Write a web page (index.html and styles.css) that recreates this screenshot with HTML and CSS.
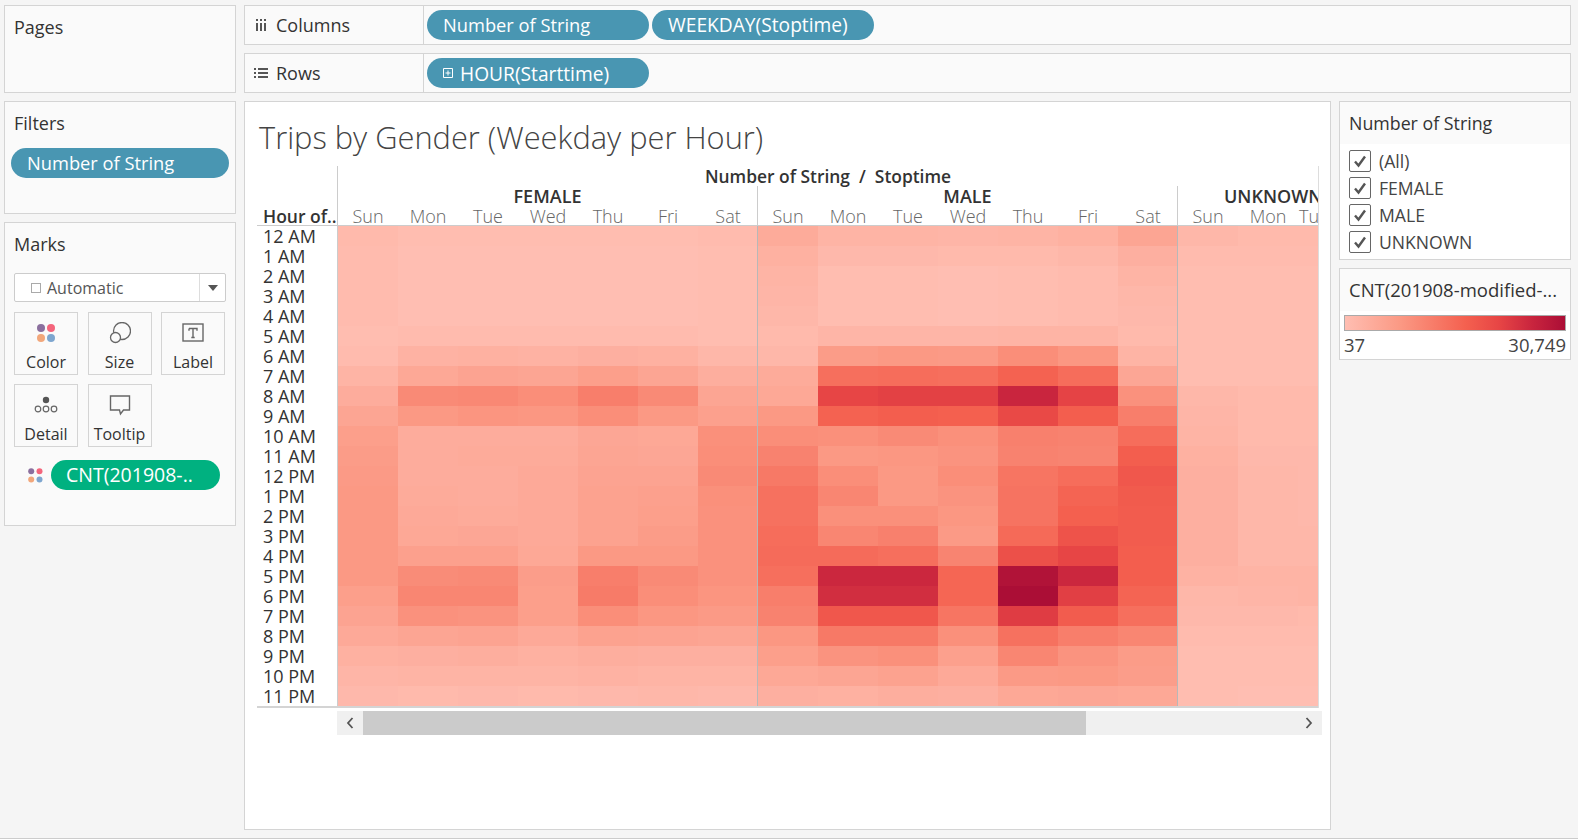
FILE: index.html
```html
<!DOCTYPE html>
<html lang="en">
<head>
    <meta charset="UTF-8">
    <title>Trips by Gender (Weekday per Hour)</title>
    <link rel="stylesheet" href="styles.css">
</head>
<body>
    <div class="app">
        <!-- Left cards -->
        <div class="left">
            <section class="card pages"><h3>Pages</h3></section>
            <section class="card filters">
                <h3>Filters</h3>
                <div class="pill blue filter-pill">Number of String</div>
            </section>
            <section class="card marks">
                <h3>Marks</h3>
                <div class="mark-select">
                    <span class="mark-box"></span>
                    <span class="mark-name">Automatic</span>
                    <span class="mark-drop"><span class="caret"></span></span>
                </div>
                <div class="mark-grid">
                    <div class="mark-btn">
                        <svg width="22" height="22" viewBox="0 0 22 22"><circle cx="6" cy="6" r="4" fill="#8b6f9e"/><circle cx="16" cy="6" r="4" fill="#f4657c"/><circle cx="6" cy="16" r="4" fill="#f2a77b"/><circle cx="16" cy="16" r="4" fill="#7ea6cf"/></svg>
                        <span>Color</span>
                    </div>
                    <div class="mark-btn">
                        <svg width="22" height="22" viewBox="0 0 22 22"><circle cx="13" cy="9" r="8.5" fill="none" stroke="#666" stroke-width="1.3"/><circle cx="6.5" cy="15.5" r="5" fill="#fafafa" stroke="#666" stroke-width="1.3"/></svg>
                        <span>Size</span>
                    </div>
                    <div class="mark-btn">
                        <svg width="22" height="22" viewBox="0 0 22 22"><rect x="1" y="2" width="20" height="17" fill="none" stroke="#666" stroke-width="1.4"/><path d="M7 6.5h8v2.2M7 6.5v2.2M11 6.5v9M9.3 15.5h3.4" fill="none" stroke="#666" stroke-width="1.4"/></svg>
                        <span>Label</span>
                    </div>
                    <div class="mark-btn">
                        <svg width="24" height="22" viewBox="0 0 24 22"><circle cx="12" cy="6" r="3.2" fill="#555"/><circle cx="4" cy="15" r="2.8" fill="none" stroke="#666" stroke-width="1.2"/><circle cx="12" cy="15" r="2.8" fill="none" stroke="#666" stroke-width="1.2"/><circle cx="20" cy="15" r="2.8" fill="none" stroke="#666" stroke-width="1.2"/></svg>
                        <span>Detail</span>
                    </div>
                    <div class="mark-btn">
                        <svg width="22" height="22" viewBox="0 0 22 22"><path d="M1.5 2h19v14h-6l-3 4-1-4h-9z" fill="none" stroke="#666" stroke-width="1.4"/></svg>
                        <span>Tooltip</span>
                    </div>
                </div>
                <div class="mark-field">
                    <svg width="15" height="15" viewBox="0 0 15 15"><circle cx="3.2" cy="3.2" r="3" fill="#8b6f9e"/><circle cx="11.5" cy="3.2" r="3" fill="#f4657c"/><circle cx="3.2" cy="11.5" r="3" fill="#f2a77b"/><circle cx="11.5" cy="11.5" r="3" fill="#7ea6cf"/></svg>
                    <div class="pill green">CNT(201908-..</div>
                </div>
            </section>
        </div>

        <div class="center">
            <!-- Shelves -->
            <div class="shelf">
                <div class="shelf-label">
                    <svg width="12" height="12" viewBox="0 0 12 12"><path d="M1 0h2v2H1zM5 0h2v2H5zM9 0h2v2H9zM1 4h2v8H1zM5 4h2v8H5zM9 4h2v8H9z" fill="#555"/></svg>
                    <span>Columns</span>
                </div>
                <div class="shelf-pills">
                    <div class="pill blue shelf-pill">Number of String</div>
                    <div class="pill blue shelf-pill caps">WEEKDAY(Stoptime)</div>
                </div>
            </div>
            <div class="shelf">
                <div class="shelf-label">
                    <svg width="14" height="12" viewBox="0 0 14 12"><path d="M0 1h2v2H0zM4 1h10v2H4zM0 5h2v2H0zM4 5h10v2H4zM0 9h2v2H0zM4 9h10v2H4z" fill="#555"/></svg>
                    <span>Rows</span>
                </div>
                <div class="shelf-pills">
                    <div class="pill blue shelf-pill row-pill caps">
                        <svg width="10" height="10" viewBox="0 0 10 10"><path d="M.5.5h9v9h-9zM2.5 5h5M5 2.5v5" fill="none" stroke="#fff"/></svg>
                        <span>HOUR(Starttime)</span>
                    </div>
                </div>
            </div>

            <div class="work">
                <!-- Worksheet -->
                <main class="view">
                    <h1 class="title">Trips by Gender (Weekday per Hour)</h1>
                    <div class="chart">
                        <div class="tier">
                            <div class="corner"></div>
                            <div class="tier-title">Number of String&nbsp; /&nbsp; Stoptime</div>
                        </div>
                        <div class="tier">
                            <div class="corner"></div>
                            <div class="gender">FEMALE</div>
                            <div class="gender">MALE</div>
                            <div class="gender gender-cut">UNKNOWN</div>
                        </div>
                        <div class="tier tier-days">
                            <div class="corner corner-name">Hour of..</div>
                            <div class="days">
                                <span>Sun</span><span>Mon</span><span>Tue</span><span>Wed</span><span>Thu</span><span>Fri</span><span>Sat</span>
                            </div>
                            <div class="days">
                                <span>Sun</span><span>Mon</span><span>Tue</span><span>Wed</span><span>Thu</span><span>Fri</span><span>Sat</span>
                            </div>
                            <div class="days days-cut">
                                <span>Sun</span><span>Mon</span><span>Tue</span>
                            </div>
                        </div>
                        <div class="plot">
                            <div class="hours">
                                <div>12 AM</div><div>1 AM</div><div>2 AM</div><div>3 AM</div><div>4 AM</div><div>5 AM</div>
                                <div>6 AM</div><div>7 AM</div><div>8 AM</div><div>9 AM</div><div>10 AM</div><div>11 AM</div>
                                <div>12 PM</div><div>1 PM</div><div>2 PM</div><div>3 PM</div><div>4 PM</div><div>5 PM</div>
                                <div>6 PM</div><div>7 PM</div><div>8 PM</div><div>9 PM</div><div>10 PM</div><div>11 PM</div>
                            </div>
                            <div class="heat" id="heat"></div>
                        </div>
                    </div>
                    <div class="scrollbar">
                        <div class="scroll-btn">
                            <svg width="8" height="12" viewBox="0 0 8 12"><path d="M6.5 1 2 6l4.5 5" fill="none" stroke="#555" stroke-width="1.8"/></svg>
                        </div>
                        <div class="scroll-thumb"></div>
                        <div class="scroll-btn scroll-end">
                            <svg width="8" height="12" viewBox="0 0 8 12"><path d="M1.5 1 6 6l-4.5 5" fill="none" stroke="#555" stroke-width="1.8"/></svg>
                        </div>
                    </div>
                </main>

                <!-- Right cards -->
                <aside class="side">
                    <section class="side-card">
                        <div class="side-title filter-title">Number of String</div>
                        <div class="check-list">
                            <div class="check"><span class="box"><svg width="14" height="14" viewBox="0 0 14 14"><path d="M2 7.5 5.5 11.5 12 2.5" fill="none" stroke="#555" stroke-width="2.4"/></svg></span>(All)</div>
                            <div class="check"><span class="box"><svg width="14" height="14" viewBox="0 0 14 14"><path d="M2 7.5 5.5 11.5 12 2.5" fill="none" stroke="#555" stroke-width="2.4"/></svg></span>FEMALE</div>
                            <div class="check"><span class="box"><svg width="14" height="14" viewBox="0 0 14 14"><path d="M2 7.5 5.5 11.5 12 2.5" fill="none" stroke="#555" stroke-width="2.4"/></svg></span>MALE</div>
                            <div class="check"><span class="box"><svg width="14" height="14" viewBox="0 0 14 14"><path d="M2 7.5 5.5 11.5 12 2.5" fill="none" stroke="#555" stroke-width="2.4"/></svg></span>UNKNOWN</div>
                        </div>
                    </section>
                    <section class="side-card">
                        <div class="side-title">CNT(201908-modified-...</div>
                        <div class="legend">
                            <div class="legend-bar"></div>
                            <div class="legend-labels"><span>37</span><span>30,749</span></div>
                        </div>
                    </section>
                </aside>
            </div>
        </div>
    </div>
    <script src="heat.js"></script>
</body>
</html>
```

FILE: styles.css
```css
/* General body styling */
body {
    margin: 0;
    background-color: #f5f5f5;
    font-family: "Open Sans", sans-serif;
    color: #333;
    overflow: hidden;
}

.app {
    display: flex;
    gap: 8px;
    height: 839px;
    box-sizing: border-box;
    padding: 5px 7px 0 4px;
    border-bottom: 1px solid #ccc;
}

.left {
    width: 232px;
    flex: none;
    display: flex;
    flex-direction: column;
    gap: 8px;
}

.center {
    flex: 1;
    display: flex;
    flex-direction: column;
    gap: 8px;
}

/* Cards */
.card {
    box-sizing: border-box;
    padding: 9px;
    background-color: #fafafa;
    border: 1px solid #d4d4d4;
}

.card h3 {
    margin: 0;
    font-size: 18px;
    font-weight: 400;
    line-height: 24px;
}

.pages { height: 88px; }
.filters { height: 113px; }
.marks { height: 304px; }

/* Pills */
.pill {
    box-sizing: border-box;
    height: 30px;
    line-height: 29px;
    border-radius: 15px;
    color: white;
    font-size: 18.3px;
    white-space: nowrap;
}

.blue { background-color: #4996b2; }
.green { background-color: #00b180; }

.caps { font-size: 19.2px; }

.filter-pill {
    margin: 13px 0 0 -3px;
    width: 218px;
    padding-left: 16px;
}

/* Marks card */
.mark-select {
    display: flex;
    align-items: center;
    box-sizing: border-box;
    width: 212px;
    height: 29px;
    margin-top: 17px;
    background-color: white;
    border: 1px solid #ccc;
    border-radius: 2px;
    font-size: 16px;
    color: #555;
}

.mark-box {
    width: 8px;
    height: 8px;
    margin-left: 16px;
    border: 1px solid #aaa;
}

.mark-name {
    flex: 1;
    margin-left: 6px;
}

.mark-drop {
    display: flex;
    align-items: center;
    justify-content: center;
    width: 25px;
    height: 100%;
    border-left: 1px solid #ddd;
}

.caret {
    border-top: 6px solid #555;
    border-left: 5px solid transparent;
    border-right: 5px solid transparent;
}

.mark-grid {
    display: grid;
    grid-template-columns: repeat(3, 64px);
    grid-auto-rows: 63px;
    gap: 9px 9.5px;
    margin-top: 10px;
}

.mark-btn {
    display: flex;
    flex-direction: column;
    align-items: center;
    box-sizing: border-box;
    padding-top: 9px;
    background-color: #fafafa;
    border: 1px solid #d4d4d4;
    font-size: 16px;
}

.mark-btn svg { height: 22px; }

.mark-btn span {
    margin-top: 8px;
    line-height: 20px;
}

.mark-field {
    display: flex;
    align-items: center;
    gap: 8px;
    margin: 13px 0 0 14px;
}

.mark-field .pill {
    width: 169px;
    padding-left: 15px;
    font-size: 19.5px;
}

/* Shelves */
.shelf {
    display: flex;
    height: 40px;
    box-sizing: border-box;
    background-color: #fafafa;
    border: 1px solid #d4d4d4;
}

.shelf-label {
    display: flex;
    align-items: center;
    width: 179px;
    flex: none;
    box-sizing: border-box;
    padding-left: 9px;
    border-right: 1px solid #d4d4d4;
    font-size: 18px;
}

.shelf-label svg { width: 14px; }

.shelf-label span { margin-left: 8px; }

.shelf-pills {
    display: flex;
    align-items: center;
    gap: 3px;
    padding-left: 3px;
}

.shelf-pill {
    width: 222px;
    padding-left: 16px;
}

.row-pill {
    display: flex;
    align-items: center;
    gap: 7px;
}

/* Worksheet */
.work {
    flex: 1;
    display: flex;
    gap: 8px;
    margin-bottom: 8px;
}

.view {
    flex: 1;
    box-sizing: border-box;
    padding: 15px 0 0 12px;
    background-color: white;
    border: 1px solid #d4d4d4;
}

.title {
    margin: 0 0 0 2px;
    font-size: 30.8px;
    font-weight: 300;
    line-height: 40px;
    color: #444;
}

.chart {
    width: 1061px;
    margin-top: 9px;
    border-right: 1px solid #ddd;
}

.tier {
    display: flex;
    height: 20px;
}

.corner {
    box-sizing: border-box;
    width: 81px;
    flex: none;
    border-right: 1px solid #ccc;
}

.corner-name {
    padding-left: 6px;
    font-size: 17.5px;
    font-weight: 600;
    line-height: 21px;
    white-space: nowrap;
}

.tier-title {
    flex: 1;
    text-align: center;
    font-size: 17.4px;
    font-weight: 600;
    line-height: 20px;
}

.gender {
    box-sizing: border-box;
    width: 420px;
    flex: none;
    text-align: center;
    border-right: 1px solid #ccc;
    font-size: 18px;
    font-weight: 600;
    line-height: 20px;
    white-space: nowrap;
}

.gender-cut {
    flex: 1;
    width: auto;
    padding-left: 46px;
    text-align: left;
    border-right: 0;
    overflow: hidden;
}

.tier-days {
    height: 19px;
    border-bottom: 1px solid #ccc;
}

.days {
    display: grid;
    grid-template-columns: repeat(7, 60px);
    box-sizing: border-box;
    border-right: 1px solid #ccc;
    flex: none;
    width: 420px;
    text-align: center;
    font-size: 18px;
    font-weight: 300;
    line-height: 21px;
    color: #666;
}

.days-cut {
    flex: 1;
    width: auto;
    grid-template-columns: repeat(3, 60px);
    border-right: 0;
    overflow: hidden;
}

.days-cut span:last-child {
    padding-left: 1px;
    text-align: left;
}

.plot {
    display: flex;
    height: 480px;
    border-bottom: 2px solid #d4d4d4;
}

.hours {
    box-sizing: border-box;
    width: 81px;
    flex: none;
    padding-left: 6px;
    border-right: 1px solid #ccc;
    font-size: 18px;
    line-height: 20px;
    font-weight: 500;
}

.heat {
    display: grid;
    grid-template-columns: repeat(16, 60px) 20px;
    grid-auto-rows: 20px;
    flex: 1;
    overflow: hidden;
}

.cell-sep { box-shadow: inset -1px 0 0 #b8b8b8; }

/* Scrollbar under the plot */
.scrollbar {
    display: flex;
    width: 985px;
    height: 24px;
    margin: 3px 0 0 80px;
    background-color: #f0f0f0;
}

.scroll-btn {
    display: flex;
    align-items: center;
    justify-content: center;
    width: 26px;
    flex: none;
}

.scroll-end { margin-left: auto; }

.scroll-thumb {
    width: 723px;
    background-color: #cbcbcb;
}

/* Right side cards */
.side {
    width: 232px;
    flex: none;
    display: flex;
    flex-direction: column;
    gap: 8px;
}

.side-card {
    background-color: white;
    border: 1px solid #d4d4d4;
}

.side-title {
    height: 42px;
    box-sizing: border-box;
    padding: 8px 9px;
    background-color: #fafafa;
    font-size: 18.5px;
    line-height: 26px;
    white-space: nowrap;
}

.filter-title { font-size: 17.8px; }

.check-list { padding: 3px 0 4px 9px; }

.check {
    display: flex;
    align-items: center;
    height: 27px;
    font-size: 17.6px;
    color: #444;
}

.box {
    display: flex;
    align-items: center;
    justify-content: center;
    box-sizing: border-box;
    width: 22px;
    height: 22px;
    margin-right: 8px;
    border: 1px solid #666;
    border-radius: 2px;
}

.legend { padding: 4px 4px 2px; }

.legend-bar {
    height: 16px;
    box-sizing: border-box;
    border: 1px solid #aaa;
    background: linear-gradient(to right, #ffbeb2, #fb9984 25%, #f4604f 55%, #e74545 70%, #c9253e 85%, #ab0e36);
}

.legend-labels {
    display: flex;
    justify-content: space-between;
    margin-top: 2px;
    font-size: 18.5px;
    line-height: 24px;
    color: #444;
}
```

FILE: heat.js
```js
/* Levels 0-100 read off per hour: female Sun-Sat, male Sun-Sat, unknown Sun-Tue */
const levels = [
    [3,1,1,1,1,1,2, 13,7,7,6,7,9,17, 5,3,3],
    [2,0,0,0,0,0,1, 9,4,4,3,3,5,10, 2,2,2],
    [2,0,0,0,0,0,1, 7,1,1,0,1,2,7, 1,1,1],
    [2,0,0,0,0,0,1, 6,1,1,0,1,2,5, 1,1,1],
    [2,0,0,0,0,0,1, 5,1,1,0,1,2,4, 1,1,1],
    [1,2,2,2,2,2,1, 3,6,6,6,7,7,3, 1,1,1],
    [2,8,9,8,10,9,5, 5,23,25,24,31,26,7, 1,1,1],
    [7,15,18,17,21,17,11, 13,47,48,47,54,48,16, 1,1,1],
    [12,33,34,31,39,33,17, 15,70,72,72,85,71,29, 5,3,3],
    [17,25,27,26,31,25,20, 25,54,56,55,68,56,39, 6,3,3],
    [21,12,12,12,16,15,30, 31,30,33,30,38,37,48, 7,3,3],
    [23,12,13,13,17,16,31, 37,25,26,28,37,36,56, 9,4,4],
    [24,12,12,14,18,18,33, 42,31,25,31,44,48,60, 10,5,4],
    [25,13,12,14,19,20,30, 46,35,25,28,45,53,58, 10,5,4],
    [25,14,13,14,19,21,29, 46,30,30,26,45,55,57, 10,5,4],
    [25,15,16,14,19,23,29, 48,35,38,24,50,62,57, 10,5,5],
    [25,20,20,15,25,25,29, 49,49,47,36,64,70,56, 10,5,5],
    [25,32,33,22,39,33,29, 47,84,84,52,97,84,56, 8,7,7],
    [21,35,35,21,41,31,27, 39,81,81,52,100,73,53, 5,6,7],
    [18,29,28,21,31,26,24, 37,60,60,44,74,57,47, 4,4,3],
    [14,17,18,14,19,18,17, 26,42,42,30,46,39,35, 2,2,2],
    [9,10,11,9,11,10,10, 21,28,30,20,35,28,23, 1,1,1],
    [6,7,7,7,8,7,7, 15,17,19,14,24,25,22, 1,1,1],
    [4,3,4,3,4,5,4, 10,9,11,10,15,16,15, 1,0,0]
];

const stops = [
    [0, 255, 190, 178],
    [25, 251, 153, 132],
    [55, 244, 96, 79],
    [70, 231, 69, 69],
    [85, 201, 37, 62],
    [100, 171, 14, 54]
];

function levelColor(level) {
    let i = 0;
    while (i < stops.length - 2 && level > stops[i + 1][0]) i++;
    const a = stops[i], b = stops[i + 1];
    const t = (level - a[0]) / (b[0] - a[0]);
    const mix = n => Math.round(a[n] + (b[n] - a[n]) * t);
    return `rgb(${mix(1)}, ${mix(2)}, ${mix(3)})`;
}

const heat = document.getElementById('heat');
levels.forEach(row => {
    row.forEach((level, col) => {
        const cell = document.createElement('div');
        cell.style.backgroundColor = levelColor(level);
        if (col === 6 || col === 13) cell.className = 'cell-sep';
        heat.appendChild(cell);
    });
});
```
